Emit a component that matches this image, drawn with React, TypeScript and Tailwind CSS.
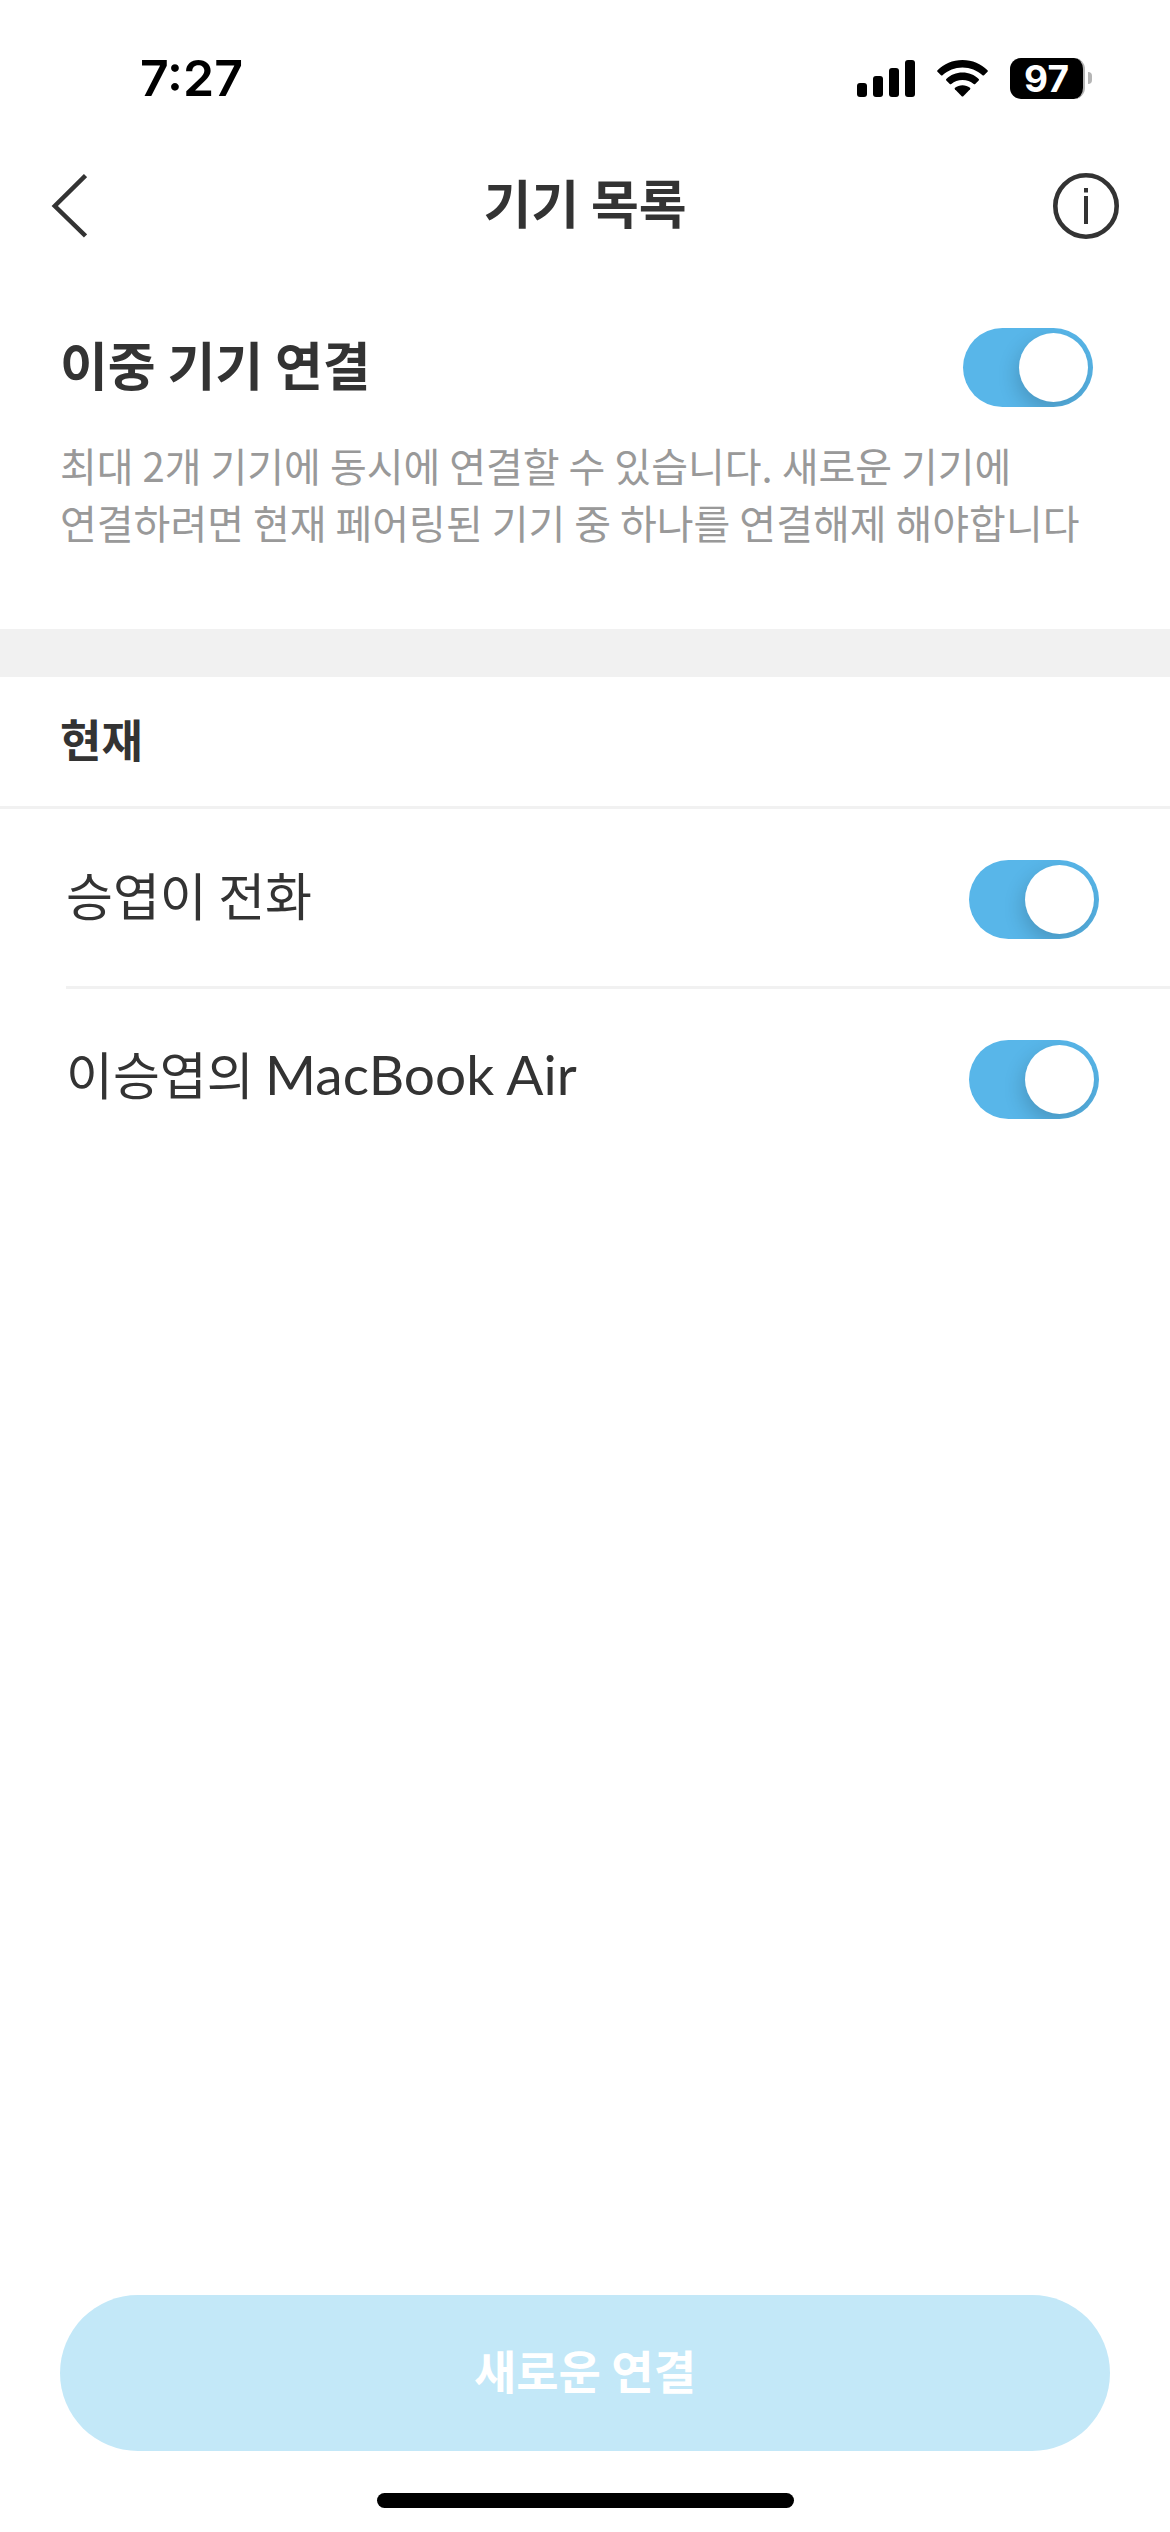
import { useState } from "react";

function Toggle({ id }: { id: string }) {
  const [on, setOn] = useState(true);
  return (
    <input
      id={id}
      type="checkbox"
      role="switch"
      checked={on}
      onChange={(e) => setOn(e.target.checked)}
      className="flex h-[79px] w-[130px] shrink-0 cursor-pointer appearance-none items-center overflow-hidden rounded-full bg-gray-300 p-[5px] before:size-[69px] before:rounded-full before:bg-white before:shadow-[-2px_8px_20px_rgba(0,0,0,0.18)] before:content-[''] checked:justify-end checked:bg-[#58b6e9]"
    />
  );
}

function StatusBar() {
  return (
    <div className="flex h-[156px] items-center justify-between pr-[78px] pl-[140px] text-black">
      <span className="font-['Inter'] text-[50px] leading-[60px] font-semibold">7:27</span>
      <div className="flex items-center gap-[22px]">
        <svg className="h-[37px] w-[58px]" viewBox="0 0 58 37" aria-hidden="true">
          <rect x="0" y="23" width="10" height="14" rx="3" />
          <rect x="16" y="16" width="10" height="21" rx="3" />
          <rect x="32" y="8" width="10" height="29" rx="3" />
          <rect x="48" y="0" width="10" height="37" rx="3" />
        </svg>
        <svg className="h-[37px] w-[51px]" viewBox="0 0 51 37" aria-hidden="true">
          <path d="M25.500 0C35.500 0 44 4 50.500 10.200Q51.200 11 50.500 11.800L47 15.200Q46.300 15.900 45.500 15.200C40 10.300 33.200 7.400 25.500 7.400S11 10.300 5.500 15.200Q4.700 15.900 4 15.200L.5 11.800Q-.2 11 .5 10.200C7 4 15.500 0 25.500 0Z" />
          <path d="M25.500 12.600C31.800 12.600 37.400 15 41.700 18.900Q42.400 19.600 41.700 20.400L38.200 23.900Q37.500 24.600 36.700 23.900C33.600 21.300 29.900 19.900 25.500 19.900S17.400 21.300 14.300 23.900Q13.500 24.600 12.800 23.900L9.300 20.400Q8.600 19.600 9.300 18.900C13.600 15 19.200 12.600 25.500 12.600Z" />
          <path d="M25.500 25.300C28.300 25.300 30.900 26.200 33 27.700Q33.800 28.400 33.100 29.200L26.300 36.200Q25.500 37 24.700 36.200L17.900 29.200Q17.200 28.400 18 27.700C20.100 26.200 22.700 25.300 25.500 25.300Z" />
        </svg>
        <div className="flex items-center gap-[3px]">
          <span className="flex h-[41px] w-[75px] items-center justify-center rounded-[11px] border-r-2 border-[#b5b5b5] bg-black font-['Inter'] text-[37px] leading-[41px] font-bold text-white">
            97
          </span>
          <span className="h-[12px] w-[4px] rounded-r-full bg-[#b5b5b5]" />
        </div>
      </div>
    </div>
  );
}

const devices = [
  { id: "phone", ko: "승엽이 전화", latin: "" },
  { id: "macbook", ko: "이승엽의 ", latin: "MacBook Air" },
];

export default function App() {
  return (
    <div className="flex min-h-screen flex-col bg-white font-['Noto_Sans_CJK_KR',sans-serif] text-[#333333]">
      <StatusBar />

      <header className="flex h-[100px] items-center justify-between px-[51px]">
        <button type="button" aria-label="뒤로" className="flex h-[66px] w-[66px] items-center">
          <svg className="h-[66px] w-[36px]" viewBox="0 0 36 66" fill="none" stroke="#333333" strokeWidth="4.500" aria-hidden="true">
            <path d="M34.500 2.500L3.800 33L34.500 63" />
          </svg>
        </button>
        <h1 className="pb-[8px] text-[52px] leading-[72px] font-bold">기기 목록</h1>
        <button type="button" aria-label="정보" className="h-[66px] w-[66px]">
          <svg className="h-[66px] w-[66px]" viewBox="0 0 66 66" aria-hidden="true">
            <circle cx="33" cy="33" r="30.700" fill="none" stroke="#333333" strokeWidth="4.600" />
            <rect x="31" y="15" width="4" height="4.500" fill="#333333" />
            <rect x="31" y="23" width="4" height="28" fill="#333333" />
          </svg>
        </button>
      </header>

      <main className="flex flex-1 flex-col">
        <section className="pt-[72px] pr-[77px] pb-[78px] pl-[60px]">
          <div className="flex items-center justify-between">
            <label htmlFor="dual" className="pb-[8px] text-[52px] leading-[64px] font-bold">
              이중 기기 연결
            </label>
            <Toggle id="dual" />
          </div>
          <p className="mt-[30px] text-[40px] leading-[57px] text-[#999999]">
            최대 2개 기기에 동시에 연결할 수 있습니다. 새로운 기기에
            <br />
            연결하려면 현재 페어링된 기기 중 하나를 연결해제 해야합니다
          </p>
        </section>

        <div className="h-[48px] bg-[#f1f1f1]" />

        <section>
          <h2 className="border-b-3 border-[#f1f1f1] px-[60px] pt-[30px] pb-[35px] text-[45px] leading-[64px] font-bold">
            현재
          </h2>
          <ul className="divide-y-3 divide-[#f1f1f1] pl-[66px]">
            {devices.map((d) => (
              <li key={d.id} className="flex items-center justify-between pt-[51px] pr-[71px] pb-[47px]">
                <label htmlFor={d.id} className="pb-[12px] text-[51px] leading-[64px] whitespace-pre">
                  {d.ko}
                  {d.latin && <span className="font-['Lato'] text-[55px]">{d.latin}</span>}
                </label>
                <Toggle id={d.id} />
              </li>
            ))}
          </ul>
        </section>
      </main>

      <footer className="flex flex-col items-center gap-[42px] px-[60px] pb-[24px]">
        <button
          type="button"
          className="h-[156px] w-full rounded-full bg-[#c3e8f8] pb-[8px] text-[46px] leading-[64px] font-bold text-white"
        >
          새로운 연결
        </button>
        <div className="h-[15px] w-[417px] rounded-full bg-black" />
      </footer>
    </div>
  );
}
